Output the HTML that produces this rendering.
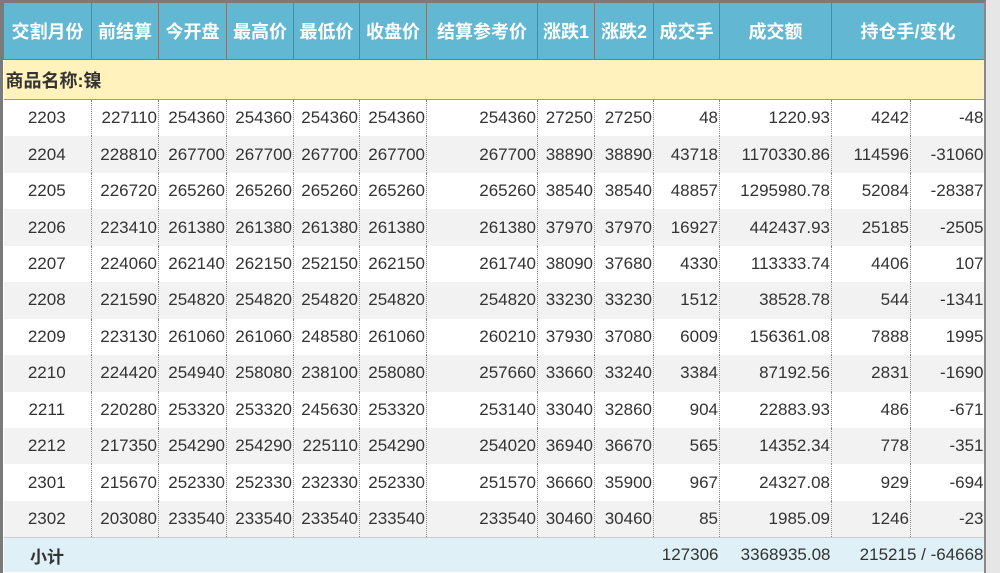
<!DOCTYPE html>
<html><head><meta charset="utf-8"><style>
html,body{margin:0;padding:0;width:1000px;height:573px;overflow:hidden;background:#e6e6e6;font-family:"Liberation Sans","Noto Sans CJK SC",sans-serif;}
.wrap{position:absolute;left:0;top:0;width:986px;height:573px;background:#fff;border-left:3px solid #7a7a7a;border-top:3px solid #7a7a7a;border-right:2px solid #8a8a8a;box-sizing:border-box;overflow:hidden;}
table{border-collapse:collapse;table-layout:fixed;width:981px;}
th{background:#62b7d3;color:#fff;font-size:18px;font-weight:bold;height:56px;border:1.5px solid #7a7a7a;border-top:none;padding:0;white-space:nowrap;}
td{font-size:17px;color:#333;height:36.45px;padding:0 1px 0 0;text-align:right;border-left:1px dotted #888;white-space:nowrap;overflow:hidden;}
td:first-child{text-align:center;border-left:none;}
tr.g td{background:#f2f2f2;}
tr.cat td{background:#fff2bc;font-weight:bold;text-align:left;height:39px;font-size:18px;border-top:1px solid #999;border-bottom:1px solid #999;padding-left:2px;}
tr.tot td{background:#dff0f7;border-left:none;height:34px;border-top:1px solid #ccc;}
</style></head><body><div class="wrap">
<table>
<colgroup><col style="width:88px"><col style="width:67px"><col style="width:68px"><col style="width:67px"><col style="width:66px"><col style="width:67px"><col style="width:111px"><col style="width:57px"><col style="width:59px"><col style="width:66px"><col style="width:112px"><col style="width:79px"><col style="width:74px"></colgroup>
<tr><th>交割月份</th><th>前结算</th><th>今开盘</th><th>最高价</th><th>最低价</th><th>收盘价</th><th>结算参考价</th><th>涨跌1</th><th>涨跌2</th><th>成交手</th><th>成交额</th><th colspan="2">持仓手/变化</th></tr>
<tr class="cat"><td colspan="13" style="text-align:left">商品名称:镍</td></tr>
<tr><td>2203</td><td>227110</td><td>254360</td><td>254360</td><td>254360</td><td>254360</td><td>254360</td><td>27250</td><td>27250</td><td>48</td><td>1220.93</td><td>4242</td><td>-48</td></tr>
<tr class="g"><td>2204</td><td>228810</td><td>267700</td><td>267700</td><td>267700</td><td>267700</td><td>267700</td><td>38890</td><td>38890</td><td>43718</td><td>1170330.86</td><td>114596</td><td>-31060</td></tr>
<tr><td>2205</td><td>226720</td><td>265260</td><td>265260</td><td>265260</td><td>265260</td><td>265260</td><td>38540</td><td>38540</td><td>48857</td><td>1295980.78</td><td>52084</td><td>-28387</td></tr>
<tr class="g"><td>2206</td><td>223410</td><td>261380</td><td>261380</td><td>261380</td><td>261380</td><td>261380</td><td>37970</td><td>37970</td><td>16927</td><td>442437.93</td><td>25185</td><td>-2505</td></tr>
<tr><td>2207</td><td>224060</td><td>262140</td><td>262150</td><td>252150</td><td>262150</td><td>261740</td><td>38090</td><td>37680</td><td>4330</td><td>113333.74</td><td>4406</td><td>107</td></tr>
<tr class="g"><td>2208</td><td>221590</td><td>254820</td><td>254820</td><td>254820</td><td>254820</td><td>254820</td><td>33230</td><td>33230</td><td>1512</td><td>38528.78</td><td>544</td><td>-1341</td></tr>
<tr><td>2209</td><td>223130</td><td>261060</td><td>261060</td><td>248580</td><td>261060</td><td>260210</td><td>37930</td><td>37080</td><td>6009</td><td>156361.08</td><td>7888</td><td>1995</td></tr>
<tr class="g"><td>2210</td><td>224420</td><td>254940</td><td>258080</td><td>238100</td><td>258080</td><td>257660</td><td>33660</td><td>33240</td><td>3384</td><td>87192.56</td><td>2831</td><td>-1690</td></tr>
<tr><td>2211</td><td>220280</td><td>253320</td><td>253320</td><td>245630</td><td>253320</td><td>253140</td><td>33040</td><td>32860</td><td>904</td><td>22883.93</td><td>486</td><td>-671</td></tr>
<tr class="g"><td>2212</td><td>217350</td><td>254290</td><td>254290</td><td>225110</td><td>254290</td><td>254020</td><td>36940</td><td>36670</td><td>565</td><td>14352.34</td><td>778</td><td>-351</td></tr>
<tr><td>2301</td><td>215670</td><td>252330</td><td>252330</td><td>232330</td><td>252330</td><td>251570</td><td>36660</td><td>35900</td><td>967</td><td>24327.08</td><td>929</td><td>-694</td></tr>
<tr class="g"><td>2302</td><td>203080</td><td>233540</td><td>233540</td><td>233540</td><td>233540</td><td>233540</td><td>30460</td><td>30460</td><td>85</td><td>1985.09</td><td>1246</td><td>-23</td></tr>
<tr class="tot"><td style="font-weight:bold;text-align:center">小计</td><td></td><td></td><td></td><td></td><td></td><td></td><td></td><td></td><td>127306</td><td>3368935.08</td><td colspan="2">215215 / -64668</td></tr>
</table></div></body></html>
